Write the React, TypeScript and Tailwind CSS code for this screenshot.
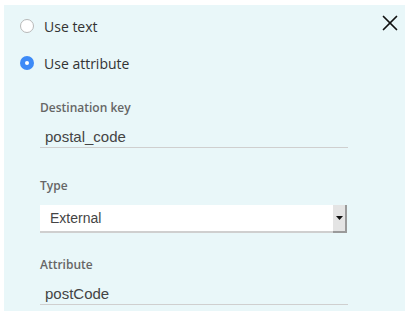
import { X } from 'lucide-react'

export default function App() {
  return (
    <div className="w-[410px] h-[316px] bg-white pt-[5px] pl-[4px]">
      <div className="relative w-[401px] h-[306px] bg-[#e9f7f9] font-['Open_Sans',sans-serif]">
        <button className="absolute right-[2px] top-[5px] text-[#111]">
          <X className="w-[26px] h-[26px]" strokeWidth={1.6} />
        </button>

        <div className="pl-[16px] pt-[13px]">
          <label className="flex items-center gap-[10px] h-[16px]">
            <span className="w-[14px] h-[14px] rounded-full border border-[#b8b8b8] bg-white" />
            <span className="text-[14px] text-[#333] font-medium">Use text</span>
          </label>
          <label className="flex items-center gap-[10px] h-[16px] mt-[21px]">
            <span className="w-[14px] h-[14px] rounded-full bg-[#3d8af7] flex items-center justify-center">
              <span className="w-[4px] h-[4px] rounded-full bg-white" />
            </span>
            <span className="text-[14px] text-[#333] font-medium">Use attribute</span>
          </label>
        </div>

        <div className="pl-[36px] pr-[57px] mt-[29px]">
          <Field label="Destination key" value="postal_code" />

          <div className="mt-[30px]">
            <div className="text-[12px] font-semibold text-[#666] leading-[16px]">Type</div>
            <div className="mt-[11px] flex h-[28px] pr-[1px]">
              <div className="flex-1 bg-white border-b-[2px] border-[#cfcfcf] flex items-center pl-[10px] text-[14px] text-[#444] font-['Liberation_Sans',sans-serif]">
                External
              </div>
              <div className="w-[14px] bg-[#e4e4e4] border-r-[2px] border-b-[2px] border-[#9a9a9a] flex items-center justify-center">
                <svg width="7" height="5" viewBox="0 0 7 5">
                  <path d="M0 0H7L3.5 4Z" fill="#111" />
                </svg>
              </div>
            </div>
          </div>

          <div className="mt-[24px]">
            <Field label="Attribute" value="postCode" />
          </div>
        </div>
      </div>
    </div>
  )
}

function Field({ label, value }: { label: string; value: string }) {
  return (
    <div>
      <div className="text-[12px] font-semibold text-[#666] leading-[16px]">{label}</div>
      <div className="mt-[12px] h-[20px] border-b border-[#cfcfcf] pl-[5px] text-[15px] text-[#444] font-['Liberation_Sans',sans-serif] leading-[18px]">
        {value}
      </div>
    </div>
  )
}
